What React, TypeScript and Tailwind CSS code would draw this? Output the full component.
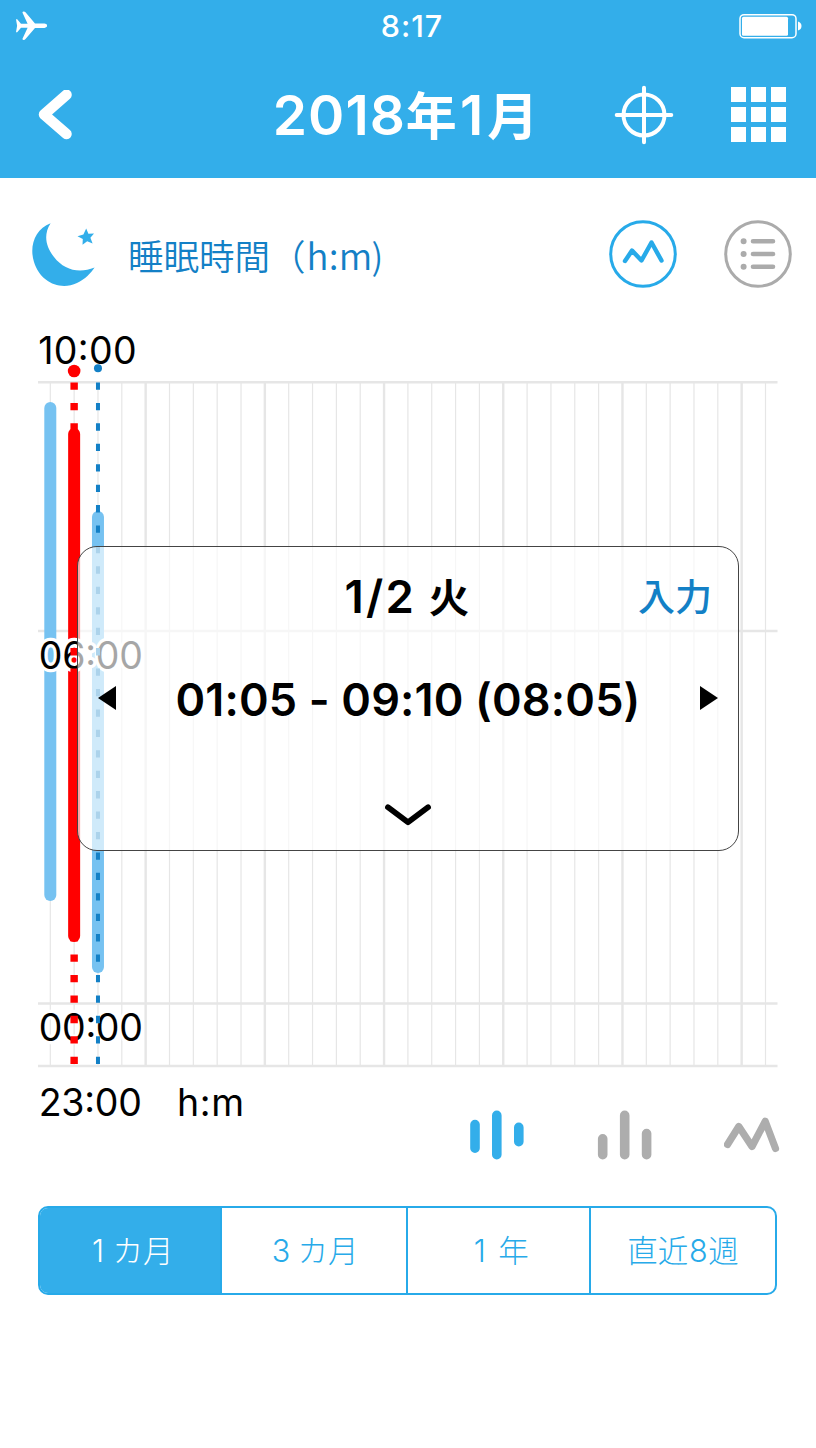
import React, { useState } from 'react';

const CHART_TOP = 382.3;
const CHART_BOTTOM = 1066;
const DAY_WIDTH = 23.84;

const dayX = (day: number) => 50.3 + (day - 1) * DAY_WIDTH;

const days = Array.from({ length: 31 }, (_, i) => i + 1);
const hourLines = [CHART_TOP, 631, 1003.5, CHART_BOTTOM];

const bars = [
  { day: 1, top: 402, bottom: 901, color: '#76c2f1' },
  { day: 2, top: 428, bottom: 942, color: '#ff0000' },
  { day: 3, top: 511, bottom: 973, color: '#76c2f1' },
];

const axisLabels = [
  { text: '10:00', x: 38.2, y: 363.7, width: 98.5 },
  { text: '06:00', x: 38.8, y: 668.7, width: 104 },
  { text: '00:00', x: 38.8, y: 1040.7, width: 104 },
  { text: '23:00', x: 38.8, y: 1115.7, width: 103 },
  { text: 'h:m', x: 177, y: 1115.7, width: 67 },
];

const Digit = ({ children }: { children: React.ReactNode }) => (
  <span className="inline-block w-[23px] text-center font-['Inter',sans-serif]">{children}</span>
);

const periods = [
  { label: <><Digit>1</Digit><span className="ml-[3px]">カ月</span></>, width: 'w-[180px]' },
  { label: <><Digit>3</Digit><span className="ml-[5px]">カ月</span></>, width: 'w-[186px]' },
  { label: <><Digit>1</Digit><span className="ml-[7px]">年</span></>, width: 'w-[183px]' },
  { label: <>直近<span className="mx-[0.7px] font-['Inter',sans-serif]">8</span>週</>, width: 'w-[186px]' },
];

const StatusBar = () => (
  <div className="grid h-[52px] grid-cols-3 items-center pl-[15px] pr-[14px]">
    <svg viewBox="0 0 32 30" className="h-[30px] w-8" fill="currentColor">
      <path d="M1 8.2 h1.2 L6 12.7 H12.6 L7.5 1.8 Q7.3 0.5 8.7 0.5 Q9.8 0.5 10.5 1.3 L20 12.4 H29.5 Q32.3 13 32.3 14.6 Q32.3 16.3 29.5 17 H20 L10.5 28 Q9.8 29 8.7 29 Q7.3 29 7.5 27.8 L12.6 16.8 H6 L2.2 21.2 H1 L2.1 14.7 Z" />
    </svg>
    <span className="pl-[7px] text-center text-[30.5px] font-medium leading-none tracking-[1px]">8:17</span>
    <svg viewBox="0 0 64 26" className="h-[26px] w-16 justify-self-end" fill="none">
      <rect x="2" y="1.7" width="56" height="23" rx="4" stroke="currentColor" strokeWidth="1.5" />
      <rect x="4" y="3.7" width="46" height="19" rx="1.5" fill="currentColor" />
      <path d="M60 8.5 Q63.5 9.5 63.5 13 Q63.5 16.5 60 17.5 Z" fill="currentColor" />
    </svg>
  </div>
);

const Header = () => (
  <header className="h-[178px] bg-[#33aeea] text-white">
    <StatusBar />
    <div className="grid h-[125px] grid-cols-[262px_288px_1fr] items-center">
      <button aria-label="back" className="pl-[37px]">
        <svg viewBox="0 0 36 50" className="h-[50px] w-9" fill="none" stroke="currentColor" strokeWidth="10.5" strokeLinecap="round" strokeLinejoin="round">
          <path d="M29.5 4.8 L7 24.5 L29.5 44" />
        </svg>
      </button>
      <h1 className="pt-[1px] text-center text-[55px] font-semibold leading-none tracking-[1px] whitespace-nowrap">
        2018<span className="text-[51px] font-bold">年</span><span className="ml-[2px] mr-[3px]">1</span><span className="text-[51px] font-bold">月</span>
      </h1>
      <div className="flex items-center justify-between pl-[64px] pr-[30px]">
        <svg viewBox="0 0 60 60" className="h-[60px] w-[60px]" fill="none" stroke="currentColor" strokeWidth="4" strokeLinecap="round">
          <circle cx="30" cy="30" r="20.5" />
          <path d="M30 2.7 V57.3 M2.7 30 H57.3" />
        </svg>
        <div className="grid grid-cols-3 gap-[5px]">
          {Array.from({ length: 9 }, (_, i) => (
            <span key={i} className="h-[14.9px] w-[14.9px] bg-white" />
          ))}
        </div>
      </div>
    </div>
  </header>
);

const SectionTitle = () => (
  <div className="flex h-[144px] items-center pl-[31px] pr-[23px] pt-2">
    <svg viewBox="0 0 66 66" className="h-[66px] w-[66px]" fill="#33aeea">
      <path d="M19.6 2.2 C4 8 -2 25 3 41 C9 61 29 70 46 62 C54 58.4 60 52 63.6 46.5 C48 53 33 49 23 36 C15 26 12 14 19.6 2.2 Z" />
      <path d="M55.2 7.5 L57.4 12.8 L63 12.5 L59.4 16.8 L61.6 22.4 L56.2 20.2 L51.5 23.8 L51.8 18 L46.5 15.2 L52.4 13.4 Z" />
    </svg>
    <h2 className="ml-[31px] flex-1 pt-[2px] text-[35.5px] font-[350] leading-none whitespace-nowrap text-[#1380c6] font-['Noto_Sans_CJK_JP',sans-serif]">
      睡眠時間（<span className="ml-[1px] text-[36.5px] tracking-[0.2px]">h:m</span><span className="-ml-[1px]">)</span>
    </h2>
    <button aria-label="graph" className="text-[#27aae9]">
      <svg viewBox="0 0 70 70" className="h-[70px] w-[70px]" fill="none" stroke="currentColor" strokeLinecap="round" strokeLinejoin="round">
        <circle cx="35" cy="35" r="32.3" strokeWidth="3" />
        <path d="M17 42 L24 31.6 L33.5 41.5 L43.5 23.5 L53.5 41.5" strokeWidth="4.4" />
      </svg>
    </button>
    <button aria-label="list" className="ml-[45px] text-[#ababab]">
      <svg viewBox="0 0 70 70" className="h-[70px] w-[70px]" fill="none" stroke="currentColor" strokeLinecap="round">
        <circle cx="35" cy="35" r="32.3" strokeWidth="3" />
        <path d="M30 22.3 H50 M30 35 H50 M30 47.7 H50" strokeWidth="4.6" />
        <path d="M20.6 22.3 h.01 M20.6 35 h.01 M20.6 47.7 h.01" strokeWidth="6" />
      </svg>
    </button>
  </div>
);

const SleepChart = () => (
  <svg viewBox="0 322 816 808" className="block h-[808px] w-[816px] overflow-visible">
    <g stroke="#e6e6e6">
      {days.map((day) => (
        <line key={day} x1={dayX(day)} x2={dayX(day)} y1={CHART_TOP} y2={CHART_BOTTOM} strokeWidth={day % 5 === 0 ? 2.4 : 1.2} />
      ))}
      {hourLines.map((y) => (
        <line key={y} x1="38" x2="777.5" y1={y} y2={y} strokeWidth="2.4" />
      ))}
    </g>
    {bars.map((bar) => (
      <rect key={bar.day} x={dayX(bar.day) - 6} y={bar.top} width="12" height={bar.bottom - bar.top} rx="6" fill={bar.color} />
    ))}
    <g fontSize="37.5" fontFamily="Inter, sans-serif" stroke="#fff" strokeWidth="6.4" strokeLinejoin="round" style={{ paintOrder: 'stroke' }}>
      {axisLabels.map((label) => (
        <text key={label.text} x={label.x} y={label.y} textLength={label.width}>{label.text}</text>
      ))}
    </g>
    {/* selected day */}
    <circle cx={dayX(2)} cy="371" r="6.3" fill="#ff0000" />
    <line x1={dayX(2)} x2={dayX(2)} y1="382.5" y2="1064" stroke="#ff0000" strokeWidth="7.4" strokeDasharray="7.3 13.13" />
    {/* today */}
    <circle cx={dayX(3)} cy="368.3" r="4" fill="#1380c6" />
    <line x1={dayX(3)} x2={dayX(3)} y1="382.5" y2="1064" stroke="#1380c6" strokeWidth="4" strokeDasharray="7.3 13.13" />
  </svg>
);

const DayPopup = () => (
  <div className="absolute left-[77px] top-[224px] flex h-[305px] w-[662px] flex-col rounded-[20px] border-[1.4px] border-[#444] bg-white/65">
    <div className="grid h-[100px] grid-cols-[1fr_200px_1fr] items-center pr-[26px]">
      <span />
      <span className="pl-[26px] text-center text-[45.5px] font-semibold leading-none tracking-[2.2px] whitespace-nowrap">
        1/2 <span className="-ml-[1px] text-[40.5px] font-bold">火</span>
      </span>
      <button className="text-right text-[37px] font-medium leading-none text-[#1380c6]">入力</button>
    </div>
    <div className="flex h-[102px] items-center justify-between px-5">
      <svg viewBox="0 0 18 24" className="h-6 w-[18px]"><path d="M0 12 L18 0 V24 Z" /></svg>
      <span className="pt-[2px] text-[45px] font-semibold leading-none tracking-[0.15px] whitespace-nowrap">01:05 - 09:10 (08:05)</span>
      <svg viewBox="0 0 18 24" className="h-6 w-[18px]"><path d="M18 12 L0 0 V24 Z" /></svg>
    </div>
    <button aria-label="close" className="mt-[54px] self-center">
      <svg viewBox="0 0 48 24" className="block h-6 w-12" fill="none" stroke="#000" strokeWidth="5.8" strokeLinecap="round" strokeLinejoin="round">
        <path d="M4 4.3 L24 19.3 L44 4.3" />
      </svg>
    </button>
  </div>
);

const ChartTypes = () => (
  <div className="flex h-[66px] items-start justify-end pr-[36px]">
    <svg viewBox="0 0 56 50" className="-mt-5 h-[50px] w-14 stroke-[#33aeea]" strokeWidth="9.6" strokeLinecap="round">
      <path d="M6 14.6 V38.2 M27.8 5.4 V44.7 M49.8 17.4 V31.7" />
    </svg>
    <svg viewBox="0 0 56 50" className="-mt-5 ml-[71px] h-[50px] w-14 stroke-[#adadad]" strokeWidth="9.6" strokeLinecap="round">
      <path d="M6.7 28.8 V44.7 M28.7 5.4 V44.7 M50.6 23.6 V44.7" />
    </svg>
    <svg viewBox="0 0 56 50" className="-mt-5 ml-[72px] h-[50px] w-14" fill="none" stroke="#adadad" strokeWidth="7.2" strokeLinecap="round" strokeLinejoin="round">
      <path d="M3.5 34.5 L14.8 16.5 L28 36.5 L41.2 11.3 L51.5 38.5" />
    </svg>
  </div>
);

const PeriodTabs = () => {
  const [active, setActive] = useState(0);

  return (
    <div className="ml-[38px] flex h-[89px] w-[739px] overflow-hidden rounded-[10px] border-2 border-[#27aae9] font-['Noto_Sans_CJK_JP',sans-serif]">
      {periods.map((period, i) => (
        <button
          key={i}
          onClick={() => setActive(i)}
          className={`${period.width} shrink-0 text-[30.5px] font-light leading-none whitespace-nowrap ${i > 0 ? 'border-l-2 border-[#27aae9]' : ''} ${active === i ? 'bg-[#33aeea] text-white' : 'text-[#27aae9]'}`}
        >
          {period.label}
        </button>
      ))}
    </div>
  );
};

export default function App() {
  return (
    <div className="h-[1448px] w-[816px] overflow-hidden bg-white text-black font-['Inter','Noto_Sans_CJK_JP',sans-serif]">
      <Header />
      <SectionTitle />
      <div className="relative">
        <SleepChart />
        <DayPopup />
      </div>
      <ChartTypes />
      <div className="mt-[10px]">
        <PeriodTabs />
      </div>
    </div>
  );
}
